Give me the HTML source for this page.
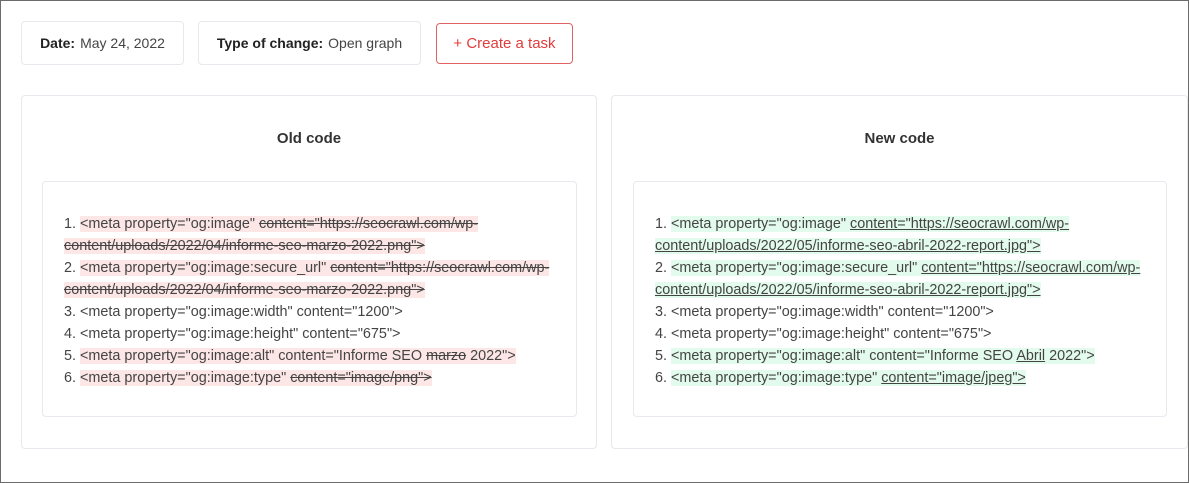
<!DOCTYPE html>
<html><head><meta charset="utf-8"><style>
*{box-sizing:border-box;margin:0;padding:0}
html,body{width:1189px;height:483px;overflow:hidden;background:#fff}
body{font-family:"Liberation Sans",sans-serif;color:#333;position:relative;border:1px solid #6b6b6b}
.box{position:absolute;border:1px solid #e6e9ee;border-radius:4px;background:#fff}
.chip{font-size:14px;display:flex;align-items:center;justify-content:center;color:#444}
.chip b{color:#222;margin-right:5px;font-weight:bold}
.btn{position:absolute;left:435px;top:22px;width:137px;height:41px;border:1px solid #e06262;border-radius:4px;color:#e03c3c;font-size:15px;display:flex;align-items:center;justify-content:center}
.title{position:absolute;top:128px;width:100%;text-align:center;font-weight:bold;font-size:15px;color:#333}
.code{position:absolute;left:21px;top:31px;font-size:14.4px;line-height:22px;color:#444;white-space:nowrap}
.r{background:#fde6e6}.g{background:#e3fbec}
s{text-decoration:line-through}
u{text-decoration:underline}
</style></head><body>
<div class="box chip" style="left:20px;top:20px;width:163px;height:44px"><b>Date:</b>May 24, 2022</div>
<div class="box chip" style="left:197px;top:20px;width:223px;height:44px"><b>Type of change:</b>Open graph</div>
<div class="btn">+ Create a task</div>

<div class="box" style="left:20px;top:94px;width:576px;height:354px">
<div class="title" style="top:34px">Old code</div>
<div class="box" style="left:20px;top:85px;width:535px;height:236px">
<div class="code">1. <span class="r">&lt;meta property="og:image" <s>content="https://seocrawl.com/wp-</s></span><br><span class="r"><s>content/uploads/2022/04/informe-seo-marzo-2022.png"&gt;</s></span><br>2. <span class="r">&lt;meta property="og:image:secure_url" <s>content="https://seocrawl.com/wp-</s></span><br><span class="r"><s>content/uploads/2022/04/informe-seo-marzo-2022.png"&gt;</s></span><br>3. &lt;meta property="og:image:width" content="1200"&gt;<br>4. &lt;meta property="og:image:height" content="675"&gt;<br>5. <span class="r">&lt;meta property="og:image:alt" content="Informe SEO <s>marzo</s> 2022"&gt;</span><br>6. <span class="r">&lt;meta property="og:image:type" <s>content="image/png"&gt;</s></span></div>
</div></div>

<div class="box" style="left:610px;top:94px;width:577px;height:354px">
<div class="title" style="top:34px">New code</div>
<div class="box" style="left:21px;top:85px;width:534px;height:236px">
<div class="code">1. <span class="g">&lt;meta property="og:image" <u>content="https://seocrawl.com/wp-</u></span><br><span class="g"><u>content/uploads/2022/05/informe-seo-abril-2022-report.jpg"&gt;</u></span><br>2. <span class="g">&lt;meta property="og:image:secure_url" <u>content="https://seocrawl.com/wp-</u></span><br><span class="g"><u>content/uploads/2022/05/informe-seo-abril-2022-report.jpg"&gt;</u></span><br>3. &lt;meta property="og:image:width" content="1200"&gt;<br>4. &lt;meta property="og:image:height" content="675"&gt;<br>5. <span class="g">&lt;meta property="og:image:alt" content="Informe SEO <u>Abril</u> 2022"&gt;</span><br>6. <span class="g">&lt;meta property="og:image:type" <u>content="image/jpeg"&gt;</u></span></div>
</div></div>
</body></html>
